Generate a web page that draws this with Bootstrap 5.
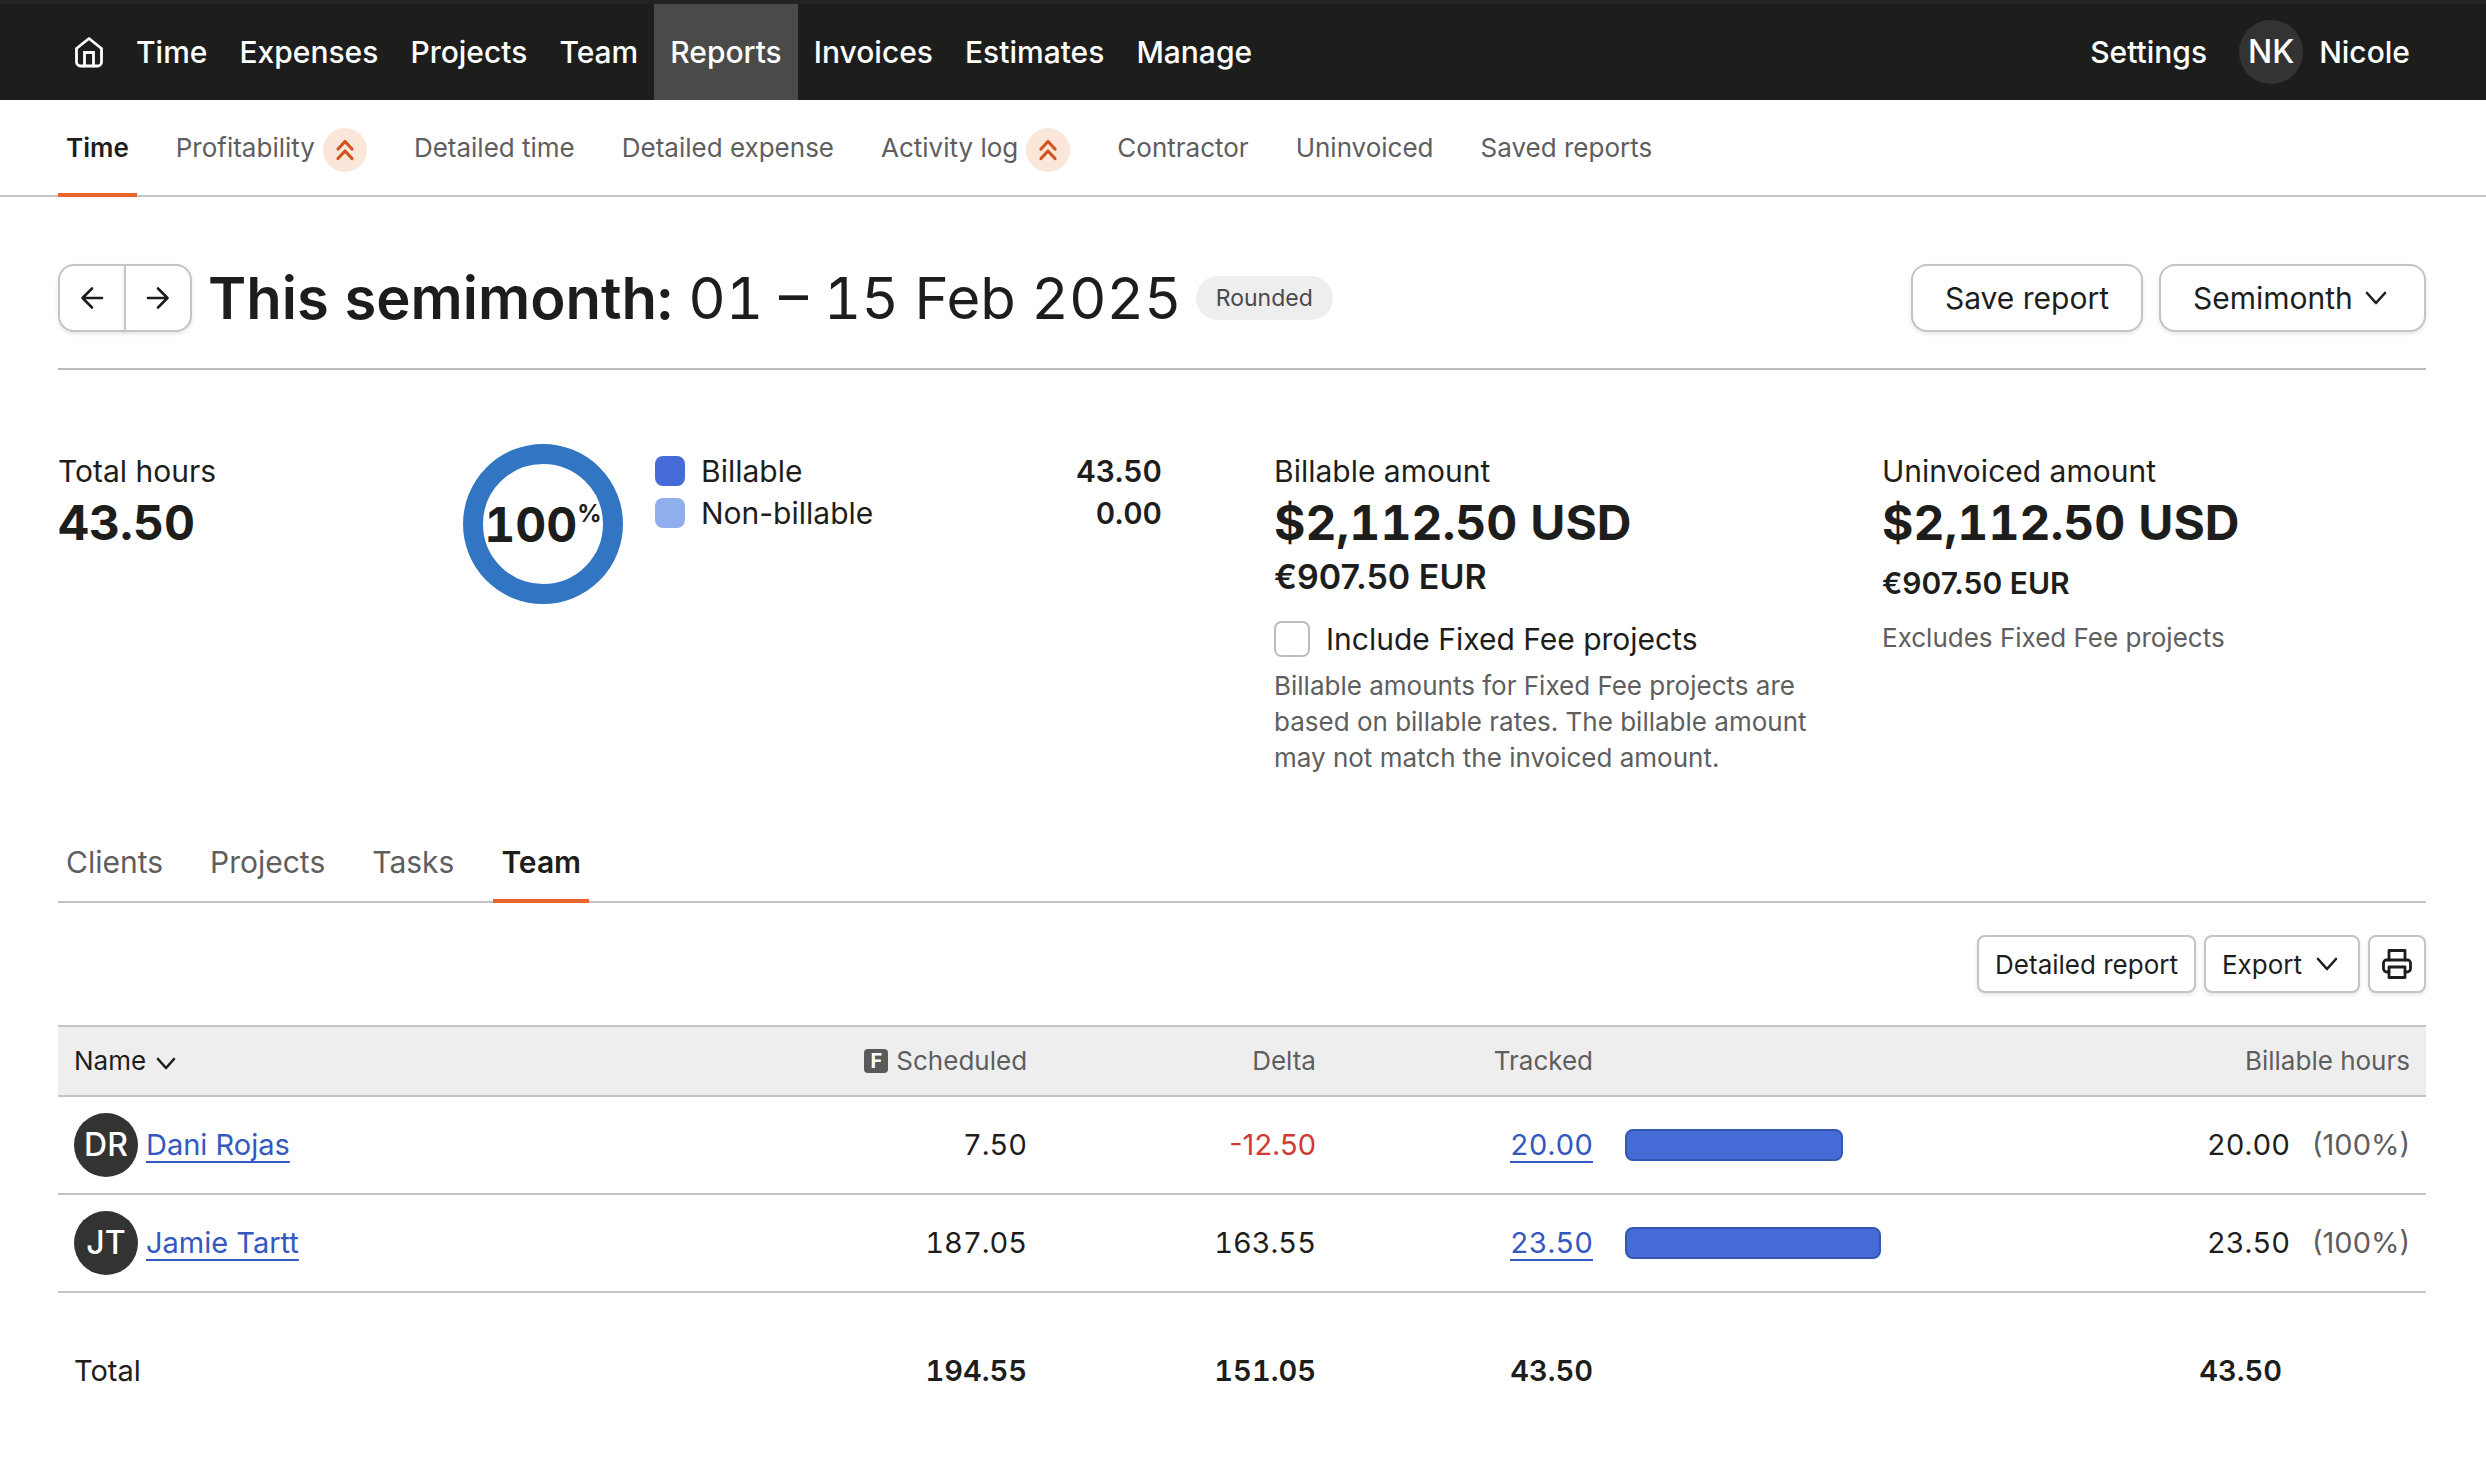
<!DOCTYPE html>
<html lang="en">
<head>
<meta charset="utf-8">
<meta name="viewport" content="width=device-width, initial-scale=1">
<title>Time report</title>
<link rel="stylesheet" href="https://cdn.jsdelivr.net/npm/bootstrap@5.3.0/dist/css/bootstrap.min.css">
<style>
:root{--ink:#1d1e1c;--muted-ink:#5e5e5e;--line:#c4c4c4;--accent:#e8662b;--blue:#446bd6;--blue-dark:#3656b4}
body{font-family:Inter,"Liberation Sans",sans-serif;font-size:30px;line-height:42px;color:var(--ink);background:#fff}
svg{display:block;flex:none;fill:none;stroke:currentColor;stroke-linecap:round;stroke-linejoin:round}
.page-gutter{padding-left:58px;padding-right:60px}
.muted-ink{color:var(--muted-ink)}
.text-26{font-size:26px;line-height:36px}
.figures{font-variant-numeric:tabular-nums}

.top-bar{background:var(--ink);border-top:4px solid #222;font-weight:500}
.top-bar .nav-link{height:96px;padding:0 16px;display:flex;align-items:center;color:#fff}
.top-bar .nav-link.active{background:#4a4a48}
.initials{width:64px;height:64px;border-radius:50%;background:#333;color:#fff;font-size:32px;font-weight:500;display:inline-flex;align-items:center;justify-content:center;flex:none}

.tab-row{gap:31px;border-bottom:2px solid var(--line)}
.tab-row .nav-link{padding:0 8px;margin-bottom:-2px;border-bottom:4px solid transparent;color:var(--muted-ink);display:flex;align-items:center;gap:8px}
.tab-row .nav-link.active{color:var(--ink);font-weight:600;border-color:var(--accent)}
.report-tabs .nav-link{height:97px;font-size:26px;padding-top:2px}
.group-tabs .nav-link{height:79px}
.upgrade{width:44px;height:44px;border-radius:50%;background:#fbe6da;color:#d2551f;display:flex;align-items:center;justify-content:center;margin-top:4px}

.soft-btn{--bs-btn-color:var(--ink);--bs-btn-bg:#fff;--bs-btn-border-color:var(--line);--bs-btn-hover-color:var(--ink);--bs-btn-hover-bg:#f6f6f6;--bs-btn-hover-border-color:#aaa;border-width:2px;box-shadow:0 2px 4px rgba(0,0,0,.1);display:inline-flex;align-items:center;justify-content:center;gap:14px;white-space:nowrap}
.soft-btn.btn-tall{height:68px;padding:0 32px;border-radius:16px;font-size:30px}
.soft-btn.btn-low{height:58px;padding:0 16px;border-radius:8px;font-size:26px}
.soft-btn.btn-menu{padding-right:20px}
.soft-btn.btn-step{width:68px;padding:0}
.btn-group>.btn.btn-step:not(:first-child){margin-left:-2px}
.soft-btn.btn-print{width:58px;padding:0}
.period-select{width:auto;height:68px;padding:0 71px 0 32px;border:2px solid var(--line);border-radius:16px;font-size:30px;line-height:42px;color:var(--ink);box-shadow:0 2px 4px rgba(0,0,0,.1);background-position:right 37px center;background-size:22px 14px;background-image:url("data:image/svg+xml,%3Csvg xmlns='http://www.w3.org/2000/svg' viewBox='0 0 22 14' fill='none' stroke='%231d1e1c' stroke-width='2.6' stroke-linecap='round' stroke-linejoin='round'%3E%3Cpath d='M2 2l9 10 9-10'/%3E%3C/svg%3E")}

.title-row{padding:67px 0 36px;border-bottom:2px solid #bbb}
.report-title{font-size:58px;line-height:68px;font-weight:400;margin:0 0 0 16px}
.report-title strong{font-weight:600}
.rounded-tag{font-size:23px;line-height:44px;padding:0 20px;border-radius:22px;background:#eee;color:#4a4a4a;margin-left:14px}

.stats{padding-top:74px}
.stat-col{padding-top:6px}
.stat-hours{width:405px}
.stat-split{width:811px;padding-right:112px;gap:32px}
.stat-billable{width:608px}
.big-figure{font-size:48px;line-height:58px;padding-top:2px;font-weight:700}
.mid-figure{font-size:34px;line-height:50px;font-weight:600}
.small-figure{font-size:30px;font-weight:600;margin-top:10px}
.ring{width:160px;height:160px;border:20px solid #3276c3;border-radius:50%;display:flex;align-items:center;justify-content:center;flex:none;white-space:nowrap}
.ring sup{font-size:24px;line-height:24px;top:0;align-self:flex-start;margin-top:36px}
.swatch{width:30px;height:30px;border-radius:8px}
.swatch-billable{background:var(--blue)}
.swatch-other{background:#90aeec}
.fee-check{width:36px;height:36px;margin:0;border:2px solid #bbb;border-radius:8px}
.fee-note{max-width:540px}

.hours-table{table-layout:fixed;margin:32px 0 0;color:var(--ink);border-color:var(--line);font-size:29px}
.hours-table>:not(caption)>*>*{padding:0 16px;height:98px;border-width:0 0 2px;vertical-align:middle;background:none}
.hours-table>thead>tr>th{height:70px;border-width:2px 0;background:#eee;font-size:26px;font-weight:400;color:var(--muted-ink)}
.hours-table>tfoot>tr>*{height:156px;border-width:0}
.hours-table a{color:#3358bf;text-decoration-thickness:2px;text-underline-offset:6px}
.sort-btn{background:none;border:0;padding:0;color:var(--ink);display:inline-flex;align-items:center;gap:10px}
.sort-btn svg{margin-top:4px}
.f-mark{width:24px;height:24px;border-radius:4px;background:#5a5a5a;color:#fff;font-size:20px;line-height:24px;font-weight:700;text-align:center}
.hours-bar{height:32px;border:2px solid var(--blue-dark);border-radius:8px;background:var(--blue)}
.over-delta{color:#cf3a33}
.share{display:inline-block;width:120px;color:var(--muted-ink);font-variant-numeric:normal}
.total-end{margin-right:128px}
.c-name{width:27%}.c-sched{width:14.6%}.c-delta{width:12.2%}.c-track{width:11.7%}.c-bar{width:22%}
</style>
<script src="https://cdn.jsdelivr.net/npm/bootstrap@5.3.0/dist/js/bootstrap.bundle.min.js"></script>
</head>
<body>
<header class="top-bar page-gutter d-flex justify-content-between">
  <nav class="nav flex-nowrap" aria-label="Main">
    <a class="nav-link" href="#" aria-label="Home"><svg width="30" height="32" viewBox="0 0 30 32" stroke-width="2.8"><path d="M2.5 12.5 15 2.5l12.500 10V26a4 4 0 0 1-4 4h-17a4 4 0 0 1-4-4z"/><path d="M10.500 30V16.500h9V30" stroke-linejoin="miter"/></svg></a>
    <a class="nav-link" href="#">Time</a>
    <a class="nav-link" href="#">Expenses</a>
    <a class="nav-link" href="#">Projects</a>
    <a class="nav-link" href="#">Team</a>
    <a class="nav-link active" href="#" aria-current="page">Reports</a>
    <a class="nav-link" href="#">Invoices</a>
    <a class="nav-link" href="#">Estimates</a>
    <a class="nav-link" href="#">Manage</a>
  </nav>
  <nav class="nav flex-nowrap" aria-label="Account">
    <a class="nav-link" href="#">Settings</a>
    <a class="nav-link gap-3" href="#"><span class="initials">NK</span>Nicole</a>
  </nav>
</header>

<nav class="nav tab-row report-tabs page-gutter" aria-label="Reports">
  <a class="nav-link active" href="#" aria-current="page">Time</a>
  <a class="nav-link" href="#">Profitability <span class="upgrade"><svg width="20" height="22" viewBox="0 0 20 22" stroke-width="3.200"><path d="M3 10l7-7.500 7 7.500M3 19.500l7-7.500 7 7.500"/></svg></span></a>
  <a class="nav-link" href="#">Detailed time</a>
  <a class="nav-link" href="#">Detailed expense</a>
  <a class="nav-link" href="#">Activity log <span class="upgrade"><svg width="20" height="22" viewBox="0 0 20 22" stroke-width="3.200"><path d="M3 10l7-7.500 7 7.500M3 19.500l7-7.500 7 7.500"/></svg></span></a>
  <a class="nav-link" href="#">Contractor</a>
  <a class="nav-link" href="#">Uninvoiced</a>
  <a class="nav-link" href="#">Saved reports</a>
</nav>

<main class="page-gutter">
  <div class="title-row d-flex align-items-center">
    <div class="btn-group" role="group" aria-label="Change period">
      <button type="button" class="btn soft-btn btn-tall btn-step" aria-label="Previous"><svg width="24" height="24" viewBox="0 0 24 24" stroke-width="2.600"><path d="M22 12H2.500M12 2.500 2.500 12l9.500 9.500"/></svg></button>
      <button type="button" class="btn soft-btn btn-tall btn-step" aria-label="Next"><svg width="24" height="24" viewBox="0 0 24 24" stroke-width="2.600"><path d="M2 12h19.500M12 2.500l9.500 9.500-9.500 9.500"/></svg></button>
    </div>
    <h1 class="report-title figures"><strong>This semimonth:</strong> 01 – 15 Feb 2025</h1>
    <span class="rounded-tag">Rounded</span>
    <div class="d-flex gap-3 ms-auto">
      <button type="button" class="btn soft-btn btn-tall">Save report</button>
      <select class="form-select period-select" aria-label="Period">
        <option>Week</option><option selected>Semimonth</option><option>Month</option><option>Quarter</option><option>Year</option>
      </select>
    </div>
  </div>

  <section class="stats d-flex align-items-start" aria-label="Summary">
    <div class="stat-col stat-hours">
      <div>Total hours</div>
      <div class="big-figure figures">43.50</div>
    </div>
    <div class="stat-split d-flex align-items-start">
      <div class="ring big-figure figures">100<sup>%</sup></div>
      <div class="stat-col flex-grow-1">
        <div class="d-flex align-items-center gap-3"><span class="swatch swatch-billable"></span>Billable<strong class="ms-auto fw-semibold figures">43.50</strong></div>
        <div class="d-flex align-items-center gap-3"><span class="swatch swatch-other"></span>Non-billable<strong class="ms-auto fw-semibold figures">0.00</strong></div>
      </div>
    </div>
    <div class="stat-col stat-billable">
      <div>Billable amount</div>
      <div class="big-figure figures">$2,112.50 USD</div>
      <div class="mid-figure">€907.50 EUR</div>
      <div class="d-flex align-items-center gap-3 mt-3">
        <input class="form-check-input fee-check" type="checkbox" id="fixedFee">
        <label for="fixedFee">Include Fixed Fee projects</label>
      </div>
      <p class="fee-note text-26 muted-ink mt-2 mb-0">Billable amounts for Fixed Fee projects are based on billable rates. The billable amount may not match the invoiced amount.</p>
    </div>
    <div class="stat-col">
      <div>Uninvoiced amount</div>
      <div class="big-figure figures">$2,112.50 USD</div>
      <div class="small-figure">€907.50 EUR</div>
      <p class="text-26 muted-ink mt-3 mb-0">Excludes Fixed Fee projects</p>
    </div>
  </section>

  <nav class="nav tab-row group-tabs mt-5" aria-label="Group by">
    <a class="nav-link" href="#">Clients</a>
    <a class="nav-link" href="#">Projects</a>
    <a class="nav-link" href="#">Tasks</a>
    <a class="nav-link active" href="#" aria-current="page">Team</a>
  </nav>

  <div class="d-flex justify-content-end gap-2 pt-4 mt-2">
    <button type="button" class="btn soft-btn btn-low">Detailed report</button>
    <button type="button" class="btn soft-btn btn-low btn-menu" aria-haspopup="menu">Export <svg width="22" height="14" viewBox="0 0 22 14" stroke-width="2.600"><path d="M2 2l9 10 9-10"/></svg></button>
    <button type="button" class="btn soft-btn btn-low btn-print" aria-label="Print"><svg width="32" height="32" viewBox="0 0 32 32" stroke-width="2.800"><path d="M8 12V2.500h16V12"/><path d="M8 24H6a3.500 3.500 0 0 1-3.500-3.500V15A3 3 0 0 1 5.500 12h21a3 3 0 0 1 3 3v5.500A3.500 3.500 0 0 1 26 24h-2"/><path d="M8 19h16v10.500H8z"/></svg></button>
  </div>

  <table class="table hours-table">
    <colgroup><col class="c-name"><col class="c-sched"><col class="c-delta"><col class="c-track"><col class="c-bar"><col></colgroup>
    <thead>
      <tr>
        <th scope="col"><button type="button" class="sort-btn">Name <svg width="20" height="14" viewBox="0 0 20 14" stroke-width="2.600"><path d="M2 3l8 9 8-9"/></svg></button></th>
        <th scope="col"><div class="d-flex align-items-center justify-content-end gap-2"><span class="f-mark">F</span>Scheduled</div></th>
        <th scope="col" class="text-end">Delta</th>
        <th scope="col" class="text-end">Tracked</th>
        <th></th>
        <th scope="col" class="text-end">Billable hours</th>
      </tr>
    </thead>
    <tbody>
      <tr>
        <td><div class="d-flex align-items-center gap-2"><span class="initials">DR</span><a href="#">Dani Rojas</a></div></td>
        <td class="text-end figures">7.50</td>
        <td class="text-end over-delta">-12.50</td>
        <td class="text-end figures"><a href="#">20.00</a></td>
        <td><div class="hours-bar" style="width:44.600%"></div></td>
        <td class="text-end figures">20.00<span class="share">(100%)</span></td>
      </tr>
      <tr>
        <td><div class="d-flex align-items-center gap-2"><span class="initials">JT</span><a href="#">Jamie Tartt</a></div></td>
        <td class="text-end figures">187.05</td>
        <td class="text-end figures">163.55</td>
        <td class="text-end figures"><a href="#">23.50</a></td>
        <td><div class="hours-bar" style="width:52.400%"></div></td>
        <td class="text-end figures">23.50<span class="share">(100%)</span></td>
      </tr>
    </tbody>
    <tfoot>
      <tr>
        <td>Total</td>
        <td class="text-end figures fw-semibold">194.55</td>
        <td class="text-end figures fw-semibold">151.05</td>
        <td class="text-end figures fw-semibold">43.50</td>
        <td></td>
        <td class="text-end figures fw-semibold"><span class="total-end">43.50</span></td>
      </tr>
    </tfoot>
  </table>
</main>
</body>
</html>
